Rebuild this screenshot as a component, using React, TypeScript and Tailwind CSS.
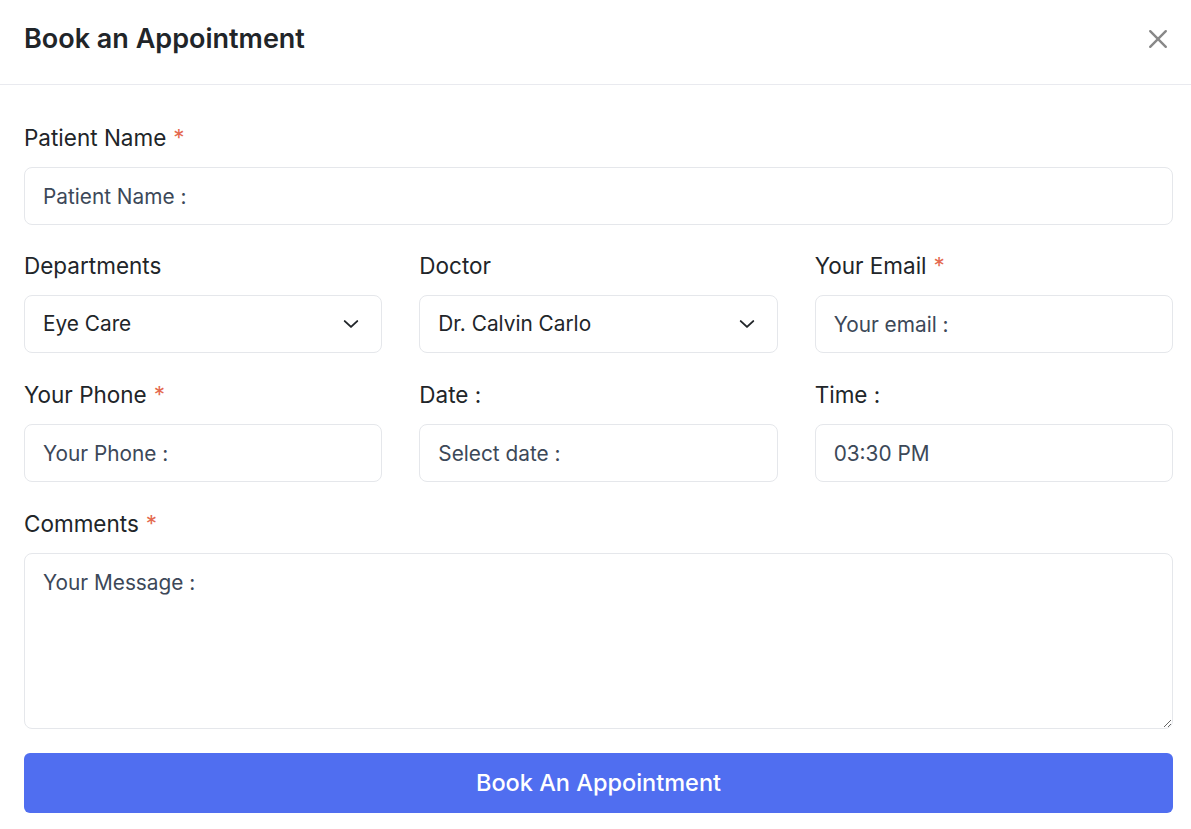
import React from "react";

const Label = ({ text, req }: { text: string; req?: boolean }) => (
  <label className="block text-[22.5px] leading-[28px] text-[#212529] mb-[15px]">
    {text}
    {req && <span className="text-[#e4694f] ml-[7px]">*</span>}
  </label>
);

const Input = ({ ph, value }: { ph: string; value?: string }) => (
  <input
    className="block w-full h-[58px] rounded-[8px] border border-[#e5e7eb] bg-white px-[18px] text-[20.8px] text-[#3c4858] placeholder:text-[#3c4858] outline-none"
    placeholder={ph}
    defaultValue={value}
  />
);

const Chevron = () => (
  <svg width="20" height="20" viewBox="0 0 24 24" fill="none" stroke="#212529" strokeWidth="2.3" strokeLinecap="round" strokeLinejoin="round">
    <path d="M4.5 8.5l7.5 7 7.5-7" />
  </svg>
);

const Select = ({ value }: { value: string }) => (
  <div className="flex items-center justify-between h-[58px] rounded-[8px] border border-[#e5e7eb] bg-white pl-[18px] pr-[20px] text-[20.8px] text-[#212529]">
    <span>{value}</span>
    <Chevron />
  </div>
);

export default function App() {
  return (
    <div className="w-[1191px] h-[829px] bg-white font-['Inter',sans-serif] overflow-hidden">
      <div className="flex items-center justify-between h-[85px] border-b border-[#e9eaef] pl-[24px] pr-[22px]">
        <h1 className="text-[27px] font-semibold text-[#212529] leading-[32px] -mt-[7px]">Book an Appointment</h1>
        <svg width="22" height="22" viewBox="0 0 24 24" fill="none" stroke="#888888" strokeWidth="2.6" strokeLinecap="round" className="-mt-[6px]">
          <path d="M3.5 3.5l17 17M20.5 3.5l-17 17" />
        </svg>
      </div>
      <div className="pl-[24px] pr-[18px] pt-[39px]">
        <Label text="Patient Name" req />
        <Input ph="Patient Name :" />
        <div className="grid grid-cols-3 gap-x-[37px] gap-y-[28px] mt-[27px]">
          <div>
            <Label text="Departments" />
            <Select value="Eye Care" />
          </div>
          <div>
            <Label text="Doctor" />
            <Select value="Dr. Calvin Carlo" />
          </div>
          <div>
            <Label text="Your Email" req />
            <Input ph="Your email :" />
          </div>
          <div>
            <Label text="Your Phone" req />
            <Input ph="Your Phone :" />
          </div>
          <div>
            <Label text="Date :" />
            <Input ph="Select date :" />
          </div>
          <div>
            <Label text="Time :" />
            <Input ph="03:30 PM" value="03:30 PM" />
          </div>
        </div>
        <div className="mt-[28px]">
          <Label text="Comments" req />
          <textarea
            className="block w-full h-[176px] rounded-[8px] border border-[#e5e7eb] bg-white px-[18px] py-[15px] text-[20.8px] leading-[28px] text-[#3c4858] placeholder:text-[#3c4858] outline-none"
            placeholder="Your Message :"
          />
        </div>
        <button className="mt-[24px] w-full h-[60px] rounded-[6px] bg-[#506ef0] text-white text-[23.5px] font-medium">
          Book An Appointment
        </button>
      </div>
    </div>
  );
}
